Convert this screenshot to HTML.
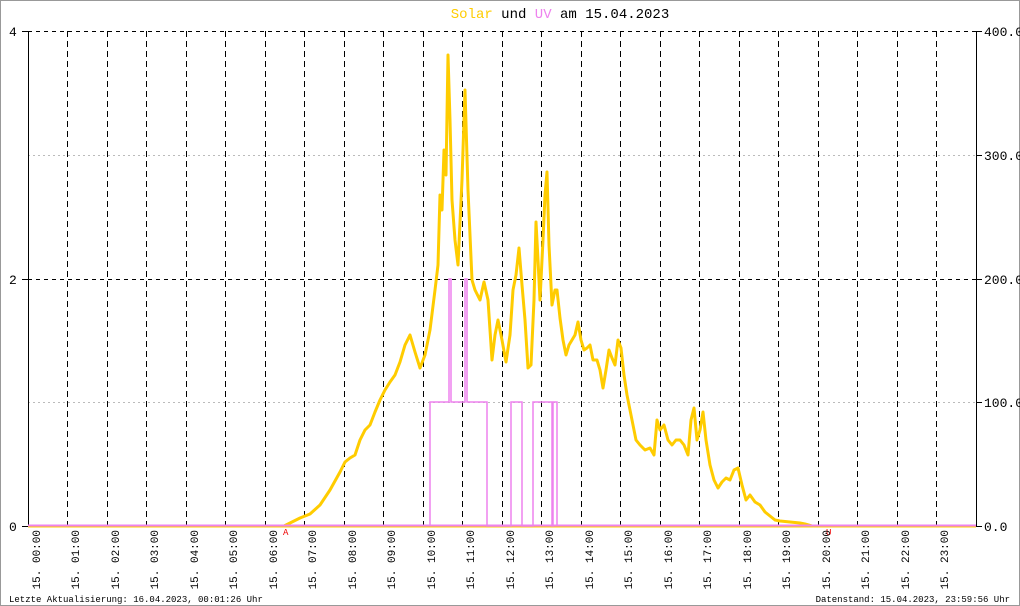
<!DOCTYPE html>
<html><head><style>
html,body{margin:0;padding:0;background:#fff}
svg{display:block}
text{font-family:"Liberation Mono","DejaVu Sans Mono",monospace}
</style></head><body>
<svg width="1020" height="606" xmlns="http://www.w3.org/2000/svg">
<rect x="0.5" y="0.5" width="1019" height="605" fill="#fff" stroke="#999"/>
<text x="560" y="18" font-size="14" text-anchor="middle"><tspan fill="#ffcc00">Solar</tspan> und <tspan fill="#ee82ee">UV</tspan> am 15.04.2023</text>
<g stroke="#000" stroke-width="1" stroke-dasharray="4,4">
<line x1="28" y1="31.5" x2="976" y2="31.5"/>
<line x1="28" y1="279.5" x2="976" y2="279.5"/>
</g>
<g stroke="#bbb" stroke-width="1" stroke-dasharray="2,3">
<line x1="28" y1="155.5" x2="976" y2="155.5"/>
<line x1="28" y1="402.5" x2="976" y2="402.5"/>
</g>
<g stroke="#000" stroke-width="1" stroke-dasharray="6,4" id="vg">
<line x1="67.5" y1="31" x2="67.5" y2="526"/><line x1="107.5" y1="31" x2="107.5" y2="526"/><line x1="146.5" y1="31" x2="146.5" y2="526"/><line x1="186.5" y1="31" x2="186.5" y2="526"/><line x1="225.5" y1="31" x2="225.5" y2="526"/><line x1="265.5" y1="31" x2="265.5" y2="526"/><line x1="304.5" y1="31" x2="304.5" y2="526"/><line x1="344.5" y1="31" x2="344.5" y2="526"/><line x1="383.5" y1="31" x2="383.5" y2="526"/><line x1="423.5" y1="31" x2="423.5" y2="526"/><line x1="462.5" y1="31" x2="462.5" y2="526"/><line x1="502.5" y1="31" x2="502.5" y2="526"/><line x1="541.5" y1="31" x2="541.5" y2="526"/><line x1="581.5" y1="31" x2="581.5" y2="526"/><line x1="620.5" y1="31" x2="620.5" y2="526"/><line x1="660.5" y1="31" x2="660.5" y2="526"/><line x1="699.5" y1="31" x2="699.5" y2="526"/><line x1="739.5" y1="31" x2="739.5" y2="526"/><line x1="778.5" y1="31" x2="778.5" y2="526"/><line x1="818.5" y1="31" x2="818.5" y2="526"/><line x1="857.5" y1="31" x2="857.5" y2="526"/><line x1="897.5" y1="31" x2="897.5" y2="526"/><line x1="936.5" y1="31" x2="936.5" y2="526"/>
</g>
<line x1="28.5" y1="31" x2="28.5" y2="526" stroke="#000"/>
<line x1="976.5" y1="31" x2="976.5" y2="526" stroke="#000"/>
<g stroke="#000"><line x1="22" y1="31.5" x2="28" y2="31.5"/><line x1="22" y1="279.5" x2="28" y2="279.5"/><line x1="22" y1="526.5" x2="28" y2="526.5"/>
<line x1="976" y1="31.5" x2="982" y2="31.5"/><line x1="976" y1="155.5" x2="982" y2="155.5"/><line x1="976" y1="279.5" x2="982" y2="279.5"/><line x1="976" y1="402.5" x2="982" y2="402.5"/><line x1="976" y1="526.5" x2="982" y2="526.5"/></g>
<g font-size="13" fill="#000"><text x="9" y="36">4</text><text x="9" y="284">2</text><text x="9" y="531">0</text>
<text x="984" y="36">400.0</text><text x="984" y="160">300.0</text><text x="984" y="284">200.0</text><text x="984" y="407">100.0</text><text x="984" y="531">0.0</text></g>
<line x1="28" y1="527" x2="976" y2="527" stroke="#ffcc00" stroke-width="1"/>
<polyline fill="none" stroke="#ee82ee" stroke-width="1.5" points="430,526 430,402 449,402 449,279 451,279 451,402 465,402 465,279 467,279 467,402 487,402 487,526 511,526 511,402 522,402 522,526 533,526 533,402 552,402 552,526 553,526 553,402 557,402 557,526"/>
<polyline fill="none" stroke="#ffcc00" stroke-width="3" stroke-linejoin="round" points="284,526 290,523 300,518 310,514 320,505 330,490 340,472 345,462 350,458 355,455 360,440 365,430 370,425 375,412 380,400 385,390 390,382 395,375 400,362 405,345 410,335 415,352 420,368 425,355 430,330 435,290 438,265 440,195 442,210 444,150 446,175 448,55 450,120 452,200 455,240 458,265 462,180 465,90 468,190 472,280 475,290 480,300 484,282 488,300 492,360 495,335 498,320 502,340 506,362 510,335 513,290 516,275 519,248 522,285 525,320 528,368 531,365 534,300 536,222 538,260 540,300 543,240 545,195 547,172 549,245 552,305 555,290 557,290 560,318 563,340 566,355 569,345 572,340 575,335 578,322 581,340 584,350 587,348 590,345 593,360 597,360 600,370 603,388 606,370 609,350 612,358 615,365 618,340 621,348 624,375 627,395 630,410 633,425 636,440 640,445 645,450 650,448 654,455 657,420 660,430 664,425 668,440 672,445 676,440 680,440 684,445 688,455 691,420 694,408 697,440 700,430 703,412 706,440 710,465 714,480 718,488 722,482 726,478 730,480 734,470 738,468 742,485 746,500 750,495 755,502 760,505 765,512 770,516 775,520 780,521 790,522 800,523 805,524 812,526"/>
<line x1="28" y1="525.5" x2="976" y2="525.5" stroke="#ee82ee" stroke-width="2"/>
<text x="283" y="535" font-size="9" fill="#e00">A</text>
<text x="826" y="535" font-size="9" fill="#e00">U</text>
<g font-size="11" fill="#000" text-anchor="end">
<text transform="translate(40,530) rotate(-90)">15. 00:00</text><text transform="translate(79,530) rotate(-90)">15. 01:00</text><text transform="translate(119,530) rotate(-90)">15. 02:00</text><text transform="translate(158,530) rotate(-90)">15. 03:00</text><text transform="translate(198,530) rotate(-90)">15. 04:00</text><text transform="translate(237,530) rotate(-90)">15. 05:00</text><text transform="translate(277,530) rotate(-90)">15. 06:00</text><text transform="translate(316,530) rotate(-90)">15. 07:00</text><text transform="translate(356,530) rotate(-90)">15. 08:00</text><text transform="translate(395,530) rotate(-90)">15. 09:00</text><text transform="translate(435,530) rotate(-90)">15. 10:00</text><text transform="translate(474,530) rotate(-90)">15. 11:00</text><text transform="translate(514,530) rotate(-90)">15. 12:00</text><text transform="translate(553,530) rotate(-90)">15. 13:00</text><text transform="translate(593,530) rotate(-90)">15. 14:00</text><text transform="translate(632,530) rotate(-90)">15. 15:00</text><text transform="translate(672,530) rotate(-90)">15. 16:00</text><text transform="translate(711,530) rotate(-90)">15. 17:00</text><text transform="translate(751,530) rotate(-90)">15. 18:00</text><text transform="translate(790,530) rotate(-90)">15. 19:00</text><text transform="translate(830,530) rotate(-90)">15. 20:00</text><text transform="translate(869,530) rotate(-90)">15. 21:00</text><text transform="translate(909,530) rotate(-90)">15. 22:00</text><text transform="translate(948,530) rotate(-90)">15. 23:00</text>
</g>
<text x="9" y="602" font-size="9">Letzte Aktualisierung: 16.04.2023, 00:01:26 Uhr</text>
<text x="1010" y="602" font-size="9" text-anchor="end">Datenstand: 15.04.2023, 23:59:56 Uhr</text>
</svg>
</body></html>
